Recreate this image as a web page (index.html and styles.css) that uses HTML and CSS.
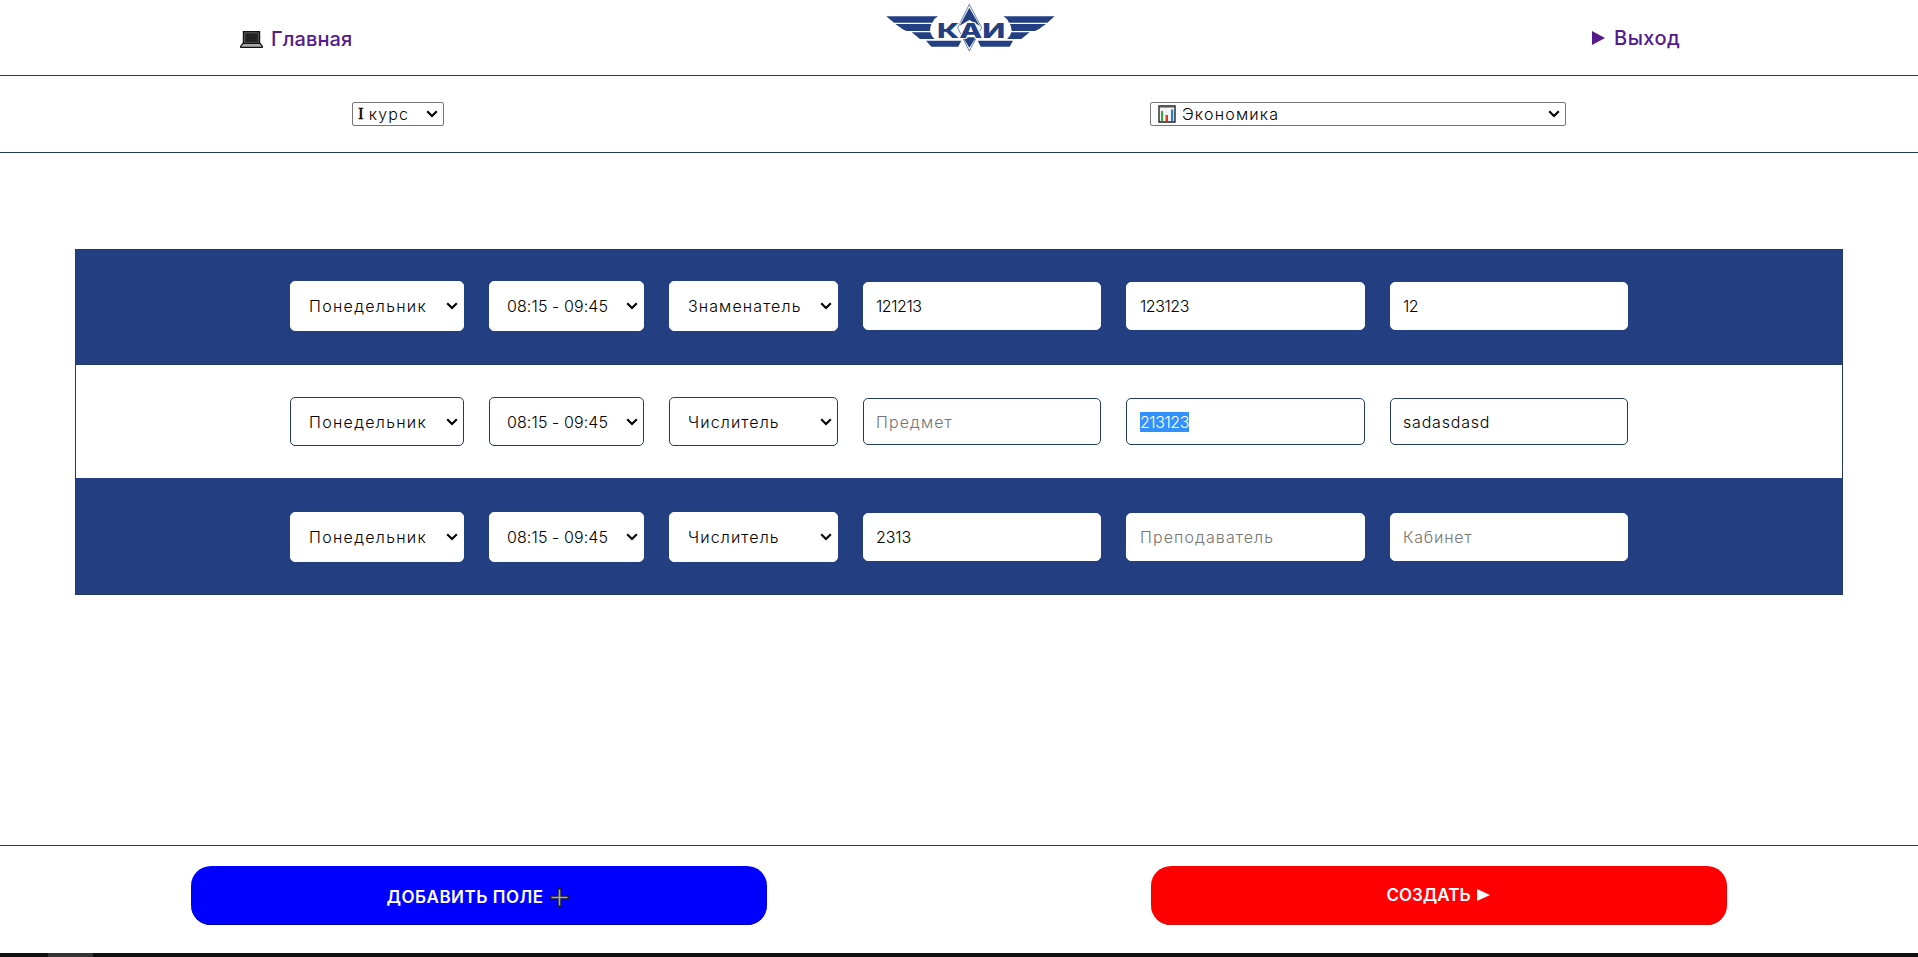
FILE: index.html
```html
<!DOCTYPE html>
<html lang="ru">
<head>
<meta charset="utf-8">
<title>Расписание</title>
<link rel="stylesheet" href="styles.css">
</head>
<body>
<svg width="0" height="0" class="sprite"><symbol id="chevron" viewBox="0 0 12 8"><path d="M1.2 1.2L6 6L10.8 1.2" fill="none" stroke="#000" stroke-width="2.1"/></symbol></svg>
<header class="header">
  <a class="nav-link home">
    <svg class="laptop" viewBox="0 0 23 17"><path d="M3.5.7h16v12h-16z" fill="#262626" stroke="#111" stroke-width="1.4"/><path d="M4.7 1.8h13.6v9.8H4.7z" fill="#222" stroke="#777" stroke-width=".7"/><path d="M3 12.4h17l2.3 2.7v1.2H.7v-1.2z" fill="#aaa" stroke="#111" stroke-width="1.2"/></svg>
    <span class="home-text">Главная</span>
  </a>
  <svg class="logo" viewBox="48 9 510 147">
    <g fill="#233f82">
      <path d="M49 49H204Q192 55 187 68H72Z"/>
      <path d="M76 72H184Q180 82 180 93H109L98 88Z"/>
      <path d="M125 97H181Q184 109 194 117H150Z"/>
      <path d="M168 122H274L265 140H184Z"/>
      <path d="M554 49H400Q412 55 417 68H532Z"/>
      <path d="M528 72H420Q425 82 425 93H495L506 88Z"/>
      <path d="M479 97H424Q421 109 411 117H454Z"/>
      <path d="M429 122H323L332 140H419Z"/>
    </g>
    <path d="M298 13L335 83L298 153L263 83Z" fill="#fff" stroke="#233f82" stroke-width="2"/>
    <path d="M298 23L329 77L298 60L269 77ZM298 143L279 112H318Z" fill="#233f82"/>
    <text x="201" y="114" class="logo-text" textLength="205" lengthAdjust="spacingAndGlyphs">КАИ</text>
  </svg>
  <a class="nav-link exit">
    <svg class="exit-icon" viewBox="0 0 13 14"><path d="M0 0L13 7L0 14Z" fill="#551a8b"/></svg>
    <span class="exit-text">Выход</span>
  </a>
</header>
<section class="filters">
  <div class="select course"><span class="roman">I</span><span class="wide">курс</span><svg class="chevron"><use href="#chevron"/></svg></div>
  <div class="select faculty"><svg class="chart" viewBox="0 0 18 18"><path d="M1 1H17V17H1Z" fill="#f2f4f6" stroke="#222" stroke-width="1.4"/><path d="M1.5 1.7H16.5" stroke="#555" stroke-width="1.6"/><path d="M3 6H5V16H3Z" fill="#39a33c"/><path d="M7.5 10H10V16H7.5Z" fill="#df3b20"/><path d="M13 4.5H15.2V16H13Z" fill="#237fcf"/></svg><span class="wide">Экономика</span><svg class="chevron"><use href="#chevron"/></svg></div>
</section>
<main class="main">
  <div class="table">
    <div class="row dark first">
      <div class="field pick day">Понедельник<svg class="chevron"><use href="#chevron"/></svg></div>
      <div class="field pick time">08:15 - 09:45<svg class="chevron"><use href="#chevron"/></svg></div>
      <div class="field pick week">Знаменатель<svg class="chevron"><use href="#chevron"/></svg></div>
      <input class="field text subject digits" value="121213">
      <input class="field text teacher digits" value="123123">
      <input class="field text room digits" value="12">
    </div>
    <div class="row light">
      <div class="field pick day">Понедельник<svg class="chevron"><use href="#chevron"/></svg></div>
      <div class="field pick time">08:15 - 09:45<svg class="chevron"><use href="#chevron"/></svg></div>
      <div class="field pick week">Числитель<svg class="chevron"><use href="#chevron"/></svg></div>
      <input class="field text subject" placeholder="Предмет">
      <div class="field text teacher digits"><span class="selected">213123</span></div>
      <input class="field text room latin" value="sadasdasd">
    </div>
    <div class="row dark last">
      <div class="field pick day">Понедельник<svg class="chevron"><use href="#chevron"/></svg></div>
      <div class="field pick time">08:15 - 09:45<svg class="chevron"><use href="#chevron"/></svg></div>
      <div class="field pick week">Числитель<svg class="chevron"><use href="#chevron"/></svg></div>
      <input class="field text subject short" value="2313">
      <input class="field text teacher" placeholder="Преподаватель">
      <input class="field text room latin" placeholder="Кабинет">
    </div>
  </div>
</main>
<footer class="footer">
  <div class="button add"><span class="add-text">ДОБАВИТЬ ПОЛЕ</span><svg class="plus" viewBox="0 0 19 19"><path d="M8 .8h3V8h7.2v3H11v7.2H8V11H.8V8H8Z" fill="#aaa" stroke="#161635" stroke-width="1.4"/></svg></div>
  <div class="button create"><span class="create-text">СОЗДАТЬ</span><svg class="play" viewBox="0 0 13 12"><path d="M0 0L13 6L0 12Z" fill="#fff"/></svg></div>
</footer>
<div class="taskbar"><div class="taskbar-item"></div></div>
</body>
</html>
```

FILE: styles.css
```css
* { box-sizing: border-box; }
body {
  margin: 0;
  height: 957px;
  display: flex;
  flex-direction: column;
  overflow: hidden;
  background: #fff;
  color: #000;
  font: 300 16px Inter, "Open Sans", sans-serif;
}
svg { display: block; flex: none; }
.sprite { width: 0; height: 0; }
.header {
  height: 76px;
  border-bottom: 1px solid #233c5e;
  display: grid;
  grid-template-columns: 646px 646px 1fr;
}
.nav-link {
  display: flex;
  align-items: center;
  color: #551a8b;
  font-size: 20px;
  font-weight: 500;
  white-space: nowrap;
}
.home { padding: 3px 0 0 240px; gap: 8px; }
.laptop { width: 23px; height: 17px; }
.home-text { letter-spacing: .1px; }
.logo { width: 170px; height: 49px; margin: 3px 0 0 240px; }
.logo-text { font: 800 62px Inter, sans-serif; fill: #233f82; stroke: #fff; stroke-width: 5px; paint-order: stroke; }
.exit { padding: 1px 0 0 300px; gap: 9px; }
.exit-icon { width: 13px; height: 14px; }
.exit-text { letter-spacing: .5px; }
.filters {
  height: 77px;
  border-bottom: 1px solid #233c5e;
  display: flex;
  align-items: center;
  padding-left: 352px;
}
.select {
  height: 24px;
  border: 1px solid #767676;
  border-radius: 2px;
  display: flex;
  align-items: center;
  padding: 0 5px;
}
.course { width: 92px; margin-right: 706px; }
.faculty { width: 416px; padding-left: 7px; }
.wide { letter-spacing: 1.2px; }
.roman { font: 400 17px "Liberation Serif", serif; -webkit-text-stroke: .4px #000; margin-right: 5px; }
.chart { width: 18px; height: 18px; margin-right: 6px; }
.chevron { width: 12px; height: 8px; margin-left: auto; }
.main { height: 692px; padding: 96px 75px 0; }
.table { height: 346px; border: 1px solid #233c5e; }
.row { display: flex; align-items: center; gap: 25px; padding-left: 214px; }
.dark { height: 116px; background: #233f82; }
.first { height: 115px; border-bottom: 1px solid #233c5e; padding-bottom: 2px; }
.last { padding-top: 2px; }
.light { height: 113px; }
.field {
  margin: 0;
  border: 1px solid #233c5e;
  border-radius: 5px;
  background: #fff;
  color: #000;
  font: inherit;
  letter-spacing: 1.1px;
  outline: 0;
  white-space: nowrap;
}
.dark .field { border-color: #fff; }
.pick { height: 50px; padding: 0 5px 0 18px; display: flex; align-items: center; }
.text { height: 48px; padding: 0 12px; }
.light .pick { height: 49px; }
.light .text { height: 47px; }
.day { width: 174px; letter-spacing: 1.3px; }
.time { width: 155px; padding-left: 17px; letter-spacing: .1px; }
.week { width: 169px; }
.subject { width: 238px; }
.teacher { width: 239px; padding-left: 13px; }
.room { width: 238px; }
.digits { letter-spacing: -.45px; }
.short { letter-spacing: -.1px; }
.latin { letter-spacing: .8px; }
.text::placeholder { color: #757575; opacity: 1; }
div.text { display: flex; align-items: center; }
.selected { background: #3390ff; color: #fff; line-height: 20px; }
.footer {
  height: 108px;
  border-top: 1px solid #233c5e;
  display: flex;
  align-items: flex-start;
  padding: 20px 0 0 191px;
  gap: 384px;
}
.button {
  width: 576px;
  height: 59px;
  border-radius: 20px;
  display: flex;
  justify-content: center;
  align-items: center;
  color: #fff;
  font-size: 17px;
  font-weight: 600;
  white-space: nowrap;
}
.add { background: #00f; padding: 3px 3px 0 0; gap: 6px; box-shadow: inset 0 -1px #0000a0; }
.add-text { letter-spacing: .5px; }
.create { background: #f00; padding: 0 2px 1px 0; gap: 6px; box-shadow: inset 0 -1px #c01818; }
.plus { width: 19px; height: 19px; }
.play { width: 13px; height: 12px; }
.taskbar { height: 4px; background: #101010; padding-left: 48px; }
.taskbar-item { width: 45px; height: 4px; background: #333; }
```
